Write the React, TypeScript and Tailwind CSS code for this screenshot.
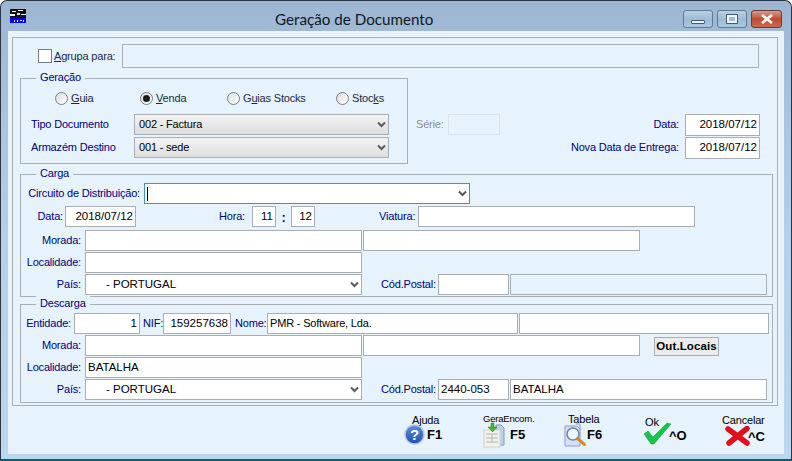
import type { ReactNode } from 'react';

const FONT = "font-['Liberation_Sans',Arial,sans-serif]";
// digits and capitals sit wider in the original font than mixed text
const WIDE = 'text-[11.5px] tracking-normal';

const Label = ({ className = '', children }: { className?: string; children: ReactNode }) => (
    <span className={`shrink-0 text-right text-[#000080] leading-[21px] whitespace-nowrap ${className}`}>{children}</span>
);

const Input = ({ className = '', value = '', right = false }: { className?: string; value?: string; right?: boolean }) => (
    <div
        className={`shrink-0 h-[21px] border border-[#a9aeb3] bg-white text-black leading-[18px] px-[2px] whitespace-nowrap overflow-hidden ${right ? 'text-right' : ''} ${className}`}
    >
        {value}
    </div>
);

const Chevron = () => (
    <svg width="9" height="7" viewBox="0 0 9 7" className="shrink-0">
        <polyline points="1,1.5 4.5,5 8,1.5" fill="none" stroke="#5a5a5a" strokeWidth="2" />
    </svg>
);

const Select = ({ className = '', children }: { className?: string; children?: ReactNode }) => (
    <div className={`shrink-0 h-[21px] border flex items-center justify-between pr-[2px] ${className}`}>
        <span className="whitespace-pre pl-[4px] text-black">{children}</span>
        <Chevron />
    </div>
);

const Radio = ({ checked = false, className = '', children }: { checked?: boolean; className?: string; children: ReactNode }) => (
    <div className={`shrink-0 flex items-center gap-[3px] ${className}`}>
        <span className="w-[13px] h-[13px] rounded-full border border-[#7b7f84] bg-gradient-to-br from-[#dcdcdc] to-white flex items-center justify-center">
            {checked && <span className="w-[7px] h-[7px] rounded-full bg-[#1c1c1c]" />}
        </span>
        <span className="text-[#1d2a3a] leading-[16px]">{children}</span>
    </div>
);

const Group = ({ title, className = '', children }: { title: string; className?: string; children: ReactNode }) => (
    <div className={`relative shrink-0 border border-[#a9aeb3] ${className}`}>
        <span className="absolute -top-[10px] left-[15px] px-[4px] bg-[#e6f3fd] text-[#000080] leading-[16px]">{title}</span>
        {children}
    </div>
);

const Logo = () => (
    <svg width="16" height="14" viewBox="0 0 16 14" shapeRendering="crispEdges" className="shrink-0">
        <rect width="16" height="9" fill="#111" />
        <rect x="2" y="2" width="4" height="1" fill="#fff" />
        <rect x="8" y="1" width="5" height="1" fill="#fff" />
        <rect x="0" y="5" width="5" height="2" fill="#eee" />
        <rect x="7" y="4" width="3" height="2" fill="#ddd" />
        <rect x="11" y="5" width="5" height="1" fill="#fff" />
        <rect y="9" width="16" height="5" fill="#0000f0" />
        <rect x="4" y="11" width="1" height="2" fill="#fff" />
        <rect x="7" y="11" width="1" height="2" fill="#fff" />
        <rect x="10" y="11" width="2" height="1" fill="#fff" />
        <rect x="13" y="11" width="1" height="2" fill="#fff" />
    </svg>
);

const WinButton = ({ className = '', children }: { className?: string; children: ReactNode }) => (
    <div className={`h-[18px] rounded-[3px] border flex items-center justify-center ${className}`}>{children}</div>
);

const HelpIcon = () => (
    <svg width="21" height="21" viewBox="0 0 21 21" className="shrink-0">
        <defs>
            <linearGradient id="hb" x1="0" y1="0" x2="0" y2="1">
                <stop offset="0" stopColor="#5f8fe0" />
                <stop offset="1" stopColor="#1c4fb0" />
            </linearGradient>
        </defs>
        <circle cx="10.5" cy="10.5" r="9.5" fill="url(#hb)" stroke="#b9c6dc" strokeWidth="1.5" />
        <text x="10.5" y="16" textAnchor="middle" fontSize="15" fontWeight="700" fill="#fff" fontFamily="Liberation Sans">?</text>
    </svg>
);

const DocIcon = () => (
    <svg width="22" height="26" viewBox="0 0 22 26" className="shrink-0">
        <path d="M13 3h5l3 3v17h-8z" fill="#bcd0ea" stroke="#7f9cc4" />
        <rect x="1" y="8" width="16" height="17" fill="#f1f1ee" stroke="#d2d2cc" />
        <path d="M3 12h12M3 16h12M3 20h12M9 12v9" stroke="#c9c9c2" strokeWidth="1.5" />
        <path d="M9 1v4h3l-4.5 5L3 5h3V1z" transform="translate(2 0)" fill="#4fae3a" stroke="#2f7f22" strokeWidth="0.5" />
    </svg>
);

const SearchIcon = () => (
    <svg width="23" height="24" viewBox="0 0 23 24" className="shrink-0">
        <path d="M1 3h12l3 3v17H1z" fill="#d9def5" stroke="#8f9cd0" />
        <path d="M12 1h4v6" fill="none" stroke="#7fa0d8" />
        <circle cx="9" cy="11" r="6" fill="#eef6fd" stroke="#6d86a6" strokeWidth="1.5" />
        <path d="M13.5 15.5l7 6" stroke="#d58a2a" strokeWidth="3" strokeLinecap="round" />
    </svg>
);

const CheckIcon = () => (
    <svg width="29" height="23" viewBox="0 0 29 23" className="shrink-0">
        <path d="M1 12l4-3 5 6L24 1l4 1-17 20h-3z" fill="#19c24a" stroke="#0f9a38" strokeWidth="0.5" />
    </svg>
);

const CrossIcon = () => (
    <svg width="28" height="20" viewBox="0 0 28 20" className="shrink-0">
        <path d="M4 3l19 14M23 2.5L5 17" stroke="#df0f1d" strokeWidth="5.5" strokeLinecap="round" fill="none" />
    </svg>
);

const Key = ({ children }: { children: ReactNode }) => (
    <span className="font-bold text-[13px] text-black leading-[16px] tracking-normal">{children}</span>
);

export default function App() {
    return (
        <div className={`w-[792px] h-[461px] flex flex-col rounded-t-[7px] border border-[#2a3640] border-b-2 border-b-[#0d5f70] bg-gradient-to-b from-[#9db7d3] via-[#b4cfe9] to-[#bcd6ef] px-[7px] pb-[5px] text-[11px] tracking-[-0.18px] ${FONT}`}>
            {/* Title bar */}
            <div className="h-[30px] shrink-0 flex items-center pl-[2px]">
                <Logo />
                <span className="ml-[249px] font-['Lato',sans-serif] text-[15.2px] tracking-normal text-[#101820] mt-[6px]">Geração de Documento</span>
                <div className="ml-auto flex gap-[4px] mr-[2px] mt-[9px] self-start">
                    <WinButton className="w-[30px] border-[#5f7a96] bg-gradient-to-b from-[#b9cfe4] via-[#9fbbd6] to-[#a9c7e0]">
                        <span className="w-[14px] h-[4px] mt-[5px] bg-[#e8eef5] border border-[#4a5a6c] rounded-[1px]" />
                    </WinButton>
                    <WinButton className="w-[30px] border-[#5f7a96] bg-gradient-to-b from-[#b9cfe4] via-[#9fbbd6] to-[#a9c7e0]">
                        <span className="w-[10px] h-[8px] border-[2px] border-[#eef3f8] outline outline-1 outline-[#4a5a6c] flex" />
                    </WinButton>
                    <WinButton className="w-[31px] border-[#6d3a30] bg-gradient-to-b from-[#d99a8c] via-[#c04a32] to-[#c86a50]">
                        <svg width="14" height="10" viewBox="0 0 14 10">
                            <path d="M2 1l10 8M12 1L2 9" stroke="#f4f4f4" strokeWidth="2.8" />
                        </svg>
                    </WinButton>
                </div>
            </div>

            {/* Client area */}
            <div className="flex-1 bg-[#e6f3fd] flex flex-col pl-[4px] pt-[6px]">
                <div className="w-[766px] h-[369px] shrink-0 border border-[#a9aeb3] pl-[7px]">
                    <div className="flex items-center mt-[6px] h-[24px]">
                        <span className="w-[14px] h-[14px] ml-[18px] border border-[#7b7f84] bg-white shrink-0" />
                        <span className="ml-[2px] w-[68px] text-[#1d2a3a]"><u>A</u>grupa para:</span>
                        <div className="w-[637px] h-[24px] border border-[#a9aeb3]" />
                    </div>

                    <div className="flex mt-[10px]">
                        <Group title="Geração" className="w-[388px] h-[86px]">
                            <div className="flex items-center pl-[34px] mt-[11px] h-[16px]">
                                <Radio className="w-[85px]"><u>G</u>uia</Radio>
                                <Radio checked className="w-[87px]"><u>V</u>enda</Radio>
                                <Radio className="w-[109px]">G<u>u</u>ias Stocks</Radio>
                                <Radio>Stoc<u>k</u>s</Radio>
                            </div>
                            <div className="flex mt-[8px] pl-[10px]">
                                <Label className="w-[103px] !text-left">Tipo Documento</Label>
                                <Select className="w-[255px] border-[#a9aeb3] bg-gradient-to-b from-[#f3f3f3] to-[#dedede]">002 - Factura</Select>
                            </div>
                            <div className="flex mt-[2px] pl-[10px]">
                                <Label className="w-[103px] !text-left">Armazém Destino</Label>
                                <Select className="w-[255px] border-[#a9aeb3] bg-gradient-to-b from-[#f3f3f3] to-[#dedede]">001 - sede</Select>
                            </div>
                        </Group>
                        <div className="flex-1 flex items-start pt-[36px] pl-[8px] pr-[17px]">
                            <span className="w-[27px] leading-[21px] text-[#8a8f94]">Série:</span>
                            <div className="ml-[5px] w-[52px] h-[21px] border border-[#dde2e6]" />
                            <div className="ml-auto flex flex-col gap-[1px]">
                                <div className="flex justify-end">
                                    <Label>Data:</Label>
                                    <Input className={`ml-[6px] w-[75px] h-[22px] ${WIDE}`} right value="2018/07/12" />
                                </div>
                                <div className="flex justify-end">
                                    <Label>Nova Data de Entrega:</Label>
                                    <Input className={`ml-[6px] w-[75px] h-[22px] ${WIDE}`} right value="2018/07/12" />
                                </div>
                            </div>
                        </div>
                    </div>

                    <Group title="Carga" className="w-[753px] h-[123px] mt-[10px]">
                        <div className="flex mt-[8px]">
                            <Label className="w-[119px]">Circuito de Distribuição:</Label>
                            <div className="ml-[4px] w-[326px] h-[21px] shrink-0 border border-[#3c8fdc] bg-white flex items-center justify-between pl-[2px] pr-[2px]">
                                <span className="w-[1px] h-[14px] bg-black" />
                                <Chevron />
                            </div>
                        </div>
                        <div className="flex mt-[2px]">
                            <Label className="w-[42px]">Data:</Label>
                            <Input className={`ml-[2px] w-[71px] ${WIDE}`} right value="2018/07/12" />
                            <Label className="ml-[83px] w-[26px]">Hora:</Label>
                            <Input className={`ml-[7px] w-[24px] ${WIDE}`} right value="11" />
                            <span className="w-[15px] text-center font-bold text-[13px] leading-[23px] text-[#000080]">:</span>
                            <Input className={`w-[24px] ${WIDE}`} right value="12" />
                            <Label className="ml-[64px] w-[36px]">Viatura:</Label>
                            <Input className="ml-[3px] w-[277px]" />
                        </div>
                        <div className="flex mt-[1px]">
                            <Label className="w-[60px]">Morada:</Label>
                            <Input className="ml-[4px] w-[277px]" />
                            <Input className="ml-[1px] w-[277px]" />
                        </div>
                        <div className="flex mt-[1px]">
                            <Label className="w-[60px]">Localidade:</Label>
                            <Input className="ml-[4px] w-[277px]" />
                        </div>
                        <div className="flex mt-[1px]">
                            <Label className="w-[60px]">País:</Label>
                            <Select className={`ml-[4px] w-[277px] border-[#a9aeb3] bg-white ${WIDE}`}>{'     - PORTUGAL'}</Select>
                            <Label className="ml-[19px] w-[54px]">Cód.Postal:</Label>
                            <Input className="ml-[3px] w-[71px]" />
                            <Input className="ml-[1px] w-[257px] !bg-[#e6f3fd]" />
                        </div>
                    </Group>

                    <Group title="Descarga" className="w-[753px] h-[99px] mt-[7px]">
                        <div className="flex mt-[8px]">
                            <Label className="w-[50px]">Entidade:</Label>
                            <Input className={`ml-[3px] w-[66px] ${WIDE}`} right value="1" />
                            <Label className="ml-[3px] w-[19px]">NIF:</Label>
                            <Input className={`ml-[1px] w-[68px] ${WIDE}`} right value="159257638" />
                            <Label className="ml-[4px] w-[31px]">Nome:</Label>
                            <Input className="ml-[1px] w-[251px]" value="PMR - Software, Lda." />
                            <Input className="ml-[1px] w-[250px]" />
                        </div>
                        <div className="flex mt-[1px]">
                            <Label className="w-[60px]">Morada:</Label>
                            <Input className="ml-[4px] w-[277px]" />
                            <Input className="ml-[1px] w-[277px]" />
                            <button className="ml-[14px] mt-[2px] w-[65px] h-[19px] border border-[#a9aeb3] bg-[#ececec] font-bold text-[11.5px] leading-[15px] text-black tracking-[0.1px]">Out.Locais</button>
                        </div>
                        <div className="flex mt-[1px]">
                            <Label className="w-[60px]">Localidade:</Label>
                            <Input className={`ml-[4px] w-[277px] ${WIDE}`} value="BATALHA" />
                        </div>
                        <div className="flex mt-[1px]">
                            <Label className="w-[60px]">País:</Label>
                            <Select className={`ml-[4px] w-[277px] border-[#a9aeb3] bg-white ${WIDE}`}>{'     - PORTUGAL'}</Select>
                            <Label className="ml-[19px] w-[54px]">Cód.Postal:</Label>
                            <Input className={`ml-[3px] w-[71px] ${WIDE}`} value="2440-053" />
                            <Input className={`ml-[1px] w-[257px] ${WIDE}`} value="BATALHA" />
                        </div>
                    </Group>
                </div>

                {/* Toolbar */}
                <div className="flex pl-[392px] text-black">
                    <div className="w-[79px] flex flex-col pt-[8px]">
                        <span className="pl-[8px] leading-[13px]">Ajuda</span>
                        <div className="flex items-center gap-[2px] mt-[-3px]">
                            <HelpIcon />
                            <Key>F1</Key>
                        </div>
                    </div>
                    <div className="w-[81px] flex flex-col pt-[8px]">
                        <span className="text-[9.5px] tracking-[-0.2px] leading-[9px] whitespace-nowrap">GeraEncom.</span>
                        <div className="flex items-center gap-[5px] mt-[-1px]">
                            <DocIcon />
                            <Key>F5</Key>
                        </div>
                    </div>
                    <div className="w-[79px] flex flex-col pt-[7px]">
                        <span className="pl-[4px] leading-[13px]">Tabela</span>
                        <div className="flex items-center mt-[-3px]">
                            <SearchIcon />
                            <Key>F6</Key>
                        </div>
                    </div>
                    <div className="w-[79px] flex flex-col pt-[10px]">
                        <span className="pl-[2px] leading-[12px]">Ok</span>
                        <div className="flex items-center mt-[-6px]">
                            <CheckIcon />
                            <span className="-ml-[3px] mt-[5px]"><Key>^O</Key></span>
                        </div>
                    </div>
                    <div className="flex flex-col pt-[8px]">
                        <span className="leading-[13px]">Cancelar</span>
                        <div className="flex items-center mt-[-1px] pl-[2px]">
                            <CrossIcon />
                            <span className="-ml-[4px] mt-[2px]"><Key>^C</Key></span>
                        </div>
                    </div>
                </div>
            </div>
        </div>
    );
}
